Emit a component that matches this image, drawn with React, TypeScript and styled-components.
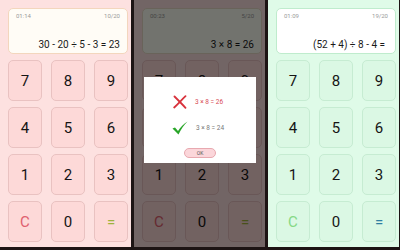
import React from 'react'
import styled, { createGlobalStyle } from 'styled-components'

const GlobalStyle = createGlobalStyle`
  html, body {
    margin: 0;
    padding: 0;
    background: #1d1414;
  }
  body {
    font-family: Roboto, "Noto Sans", "DejaVu Sans", sans-serif;
  }
`

interface Theme {
  bg: string
  display: string
  displayBorder: string
  key: string
  keyBorder: string
  clear: string
  equals: string
}

const pink: Theme = {
  bg: '#fde1e0',
  display: '#fffcf6',
  displayBorder: '#f3d6bd',
  key: '#fdd9d8',
  keyBorder: '#e9c2c1',
  clear: '#e0606e',
  equals: '#9fb23c',
}

const pinkDim: Theme = {
  ...pink,
  display: '#fdfff4',
  displayBorder: '#e8dcc8',
}

const green: Theme = {
  bg: '#dffbe8',
  display: '#ffffff',
  displayBorder: '#bfeccd',
  key: '#dbf8e4',
  keyBorder: '#c6ecd2',
  clear: '#86d986',
  equals: '#2f7fa2',
}

const Row = styled.div`
  display: flex;
  gap: 3px;
  width: 400px;
  height: 250px;
  overflow: hidden;
`

const Screen = styled.div<{ $t: Theme }>`
  position: relative;
  width: 131px;
  height: 247px;
  flex: none;
  background: ${(p) => p.$t.bg};
  padding: 8px 3px 0 8px;
  box-sizing: border-box;
`

const Display = styled.div<{ $t: Theme }>`
  width: 120px;
  height: 46px;
  box-sizing: border-box;
  background: ${(p) => p.$t.display};
  border: 1px solid ${(p) => p.$t.displayBorder};
  border-radius: 5px;
  padding: 3px 7px 0 7px;
  display: flex;
  flex-direction: column;
`

const Meta = styled.div`
  display: flex;
  justify-content: space-between;
  font-size: 6px;
  color: #9a9a9a;
  line-height: 7px;
`

const Equation = styled.div<{ $pad?: number }>`
  margin-top: auto;
  margin-bottom: 3px;
  padding-right: ${(p) => p.$pad || 0}px;
  text-align: right;
  font-size: 10px;
  color: #1a1a1a;
  white-space: nowrap;
`

const Pad = styled.div`
  margin-top: 6px;
  display: grid;
  grid-template-columns: repeat(3, 34px);
  grid-auto-rows: 41px;
  column-gap: 9px;
  row-gap: 6px;
`

const Key = styled.div<{ $t: Theme; $color?: string }>`
  box-sizing: border-box;
  background: ${(p) => p.$t.key};
  border: 1px solid ${(p) => p.$t.keyBorder};
  border-radius: 5px;
  display: flex;
  align-items: center;
  justify-content: center;
  font-size: 15px;
  color: ${(p) => p.$color || '#151515'};
`

const Shade = styled.div`
  position: absolute;
  inset: 0;
  background: rgba(0, 0, 0, 0.55);
  display: flex;
  align-items: flex-start;
  justify-content: center;
`

const Dialog = styled.div`
  margin-top: 77px;
  margin-left: 1px;
  width: 112px;
  height: 86px;
  background: #fff;
  display: flex;
  flex-direction: column;
  align-items: center;
  padding-top: 16px;
  box-sizing: border-box;
`

const Answer = styled.div<{ $color: string }>`
  display: flex;
  align-items: center;
  gap: 8px;
  height: 18px;
  margin-bottom: 8px;
  margin-left: -4px;
  font-size: 6.5px;
  color: ${(p) => p.$color};
`

const Ok = styled.div`
  margin-top: 3px;
  width: 32px;
  height: 10px;
  box-sizing: border-box;
  border-radius: 5px;
  background: #fbd6da;
  border: 1px solid #e8a9b0;
  font-size: 5px;
  color: #555;
  display: flex;
  align-items: center;
  justify-content: center;
`

const Cross = () => (
  <svg width="14" height="14" viewBox="0 0 14 14">
    <path d="M1.5 1.5 C5 5, 9 9, 12.5 12.8" stroke="#d8323c" strokeWidth="1.8" fill="none" strokeLinecap="round" />
    <path d="M12.5 1.2 C9 4.5, 5 9, 1.2 12.5" stroke="#d8323c" strokeWidth="1.8" fill="none" strokeLinecap="round" />
  </svg>
)

const Check = () => (
  <svg width="16" height="14" viewBox="0 0 16 14">
    <path d="M0.5 7.5 L3 6.5 L6 10 C8.5 6, 11.5 3, 15.5 0.5 C12 4, 9 8, 6.5 13.5 Z" fill="#28a528" />
  </svg>
)

const keys = ['7', '8', '9', '4', '5', '6', '1', '2', '3']

const Calc: React.FC<{
  t: Theme
  time: string
  count: string
  eq: string
  pad?: number
  children?: React.ReactNode
}> = ({ t, time, count, eq, pad, children }) => (
  <Screen $t={t}>
    <Display $t={t}>
      <Meta>
        <span>{time}</span>
        <span>{count}</span>
      </Meta>
      <Equation $pad={pad}>{eq}</Equation>
    </Display>
    <Pad>
      {keys.map((k) => (
        <Key key={k} $t={t}>
          {k}
        </Key>
      ))}
      <Key $t={t} $color={t.clear}>
        C
      </Key>
      <Key $t={t}>0</Key>
      <Key $t={t} $color={t.equals}>
        =
      </Key>
    </Pad>
    {children}
  </Screen>
)

export default function App() {
  return (
    <>
      <GlobalStyle />
      <Row>
        <Calc t={pink} time="01:14" count="10/20" eq="30 - 20 ÷ 5 - 3 = 23" />
        <Calc t={pinkDim} time="00:23" count="5/20" eq="3 × 8 = 26">
          <Shade>
            <Dialog>
              <Answer $color="#d84a55">
                <Cross />
                <span>3 × 8 = 26</span>
              </Answer>
              <Answer $color="#777">
                <Check />
                <span>3 × 8 = 24</span>
              </Answer>
              <Ok>OK</Ok>
            </Dialog>
          </Shade>
        </Calc>
        <Calc t={green} time="01:09" count="19/20" eq="(52 + 4) ÷ 8 - 4 =" pad={3} />
      </Row>
    </>
  )
}
